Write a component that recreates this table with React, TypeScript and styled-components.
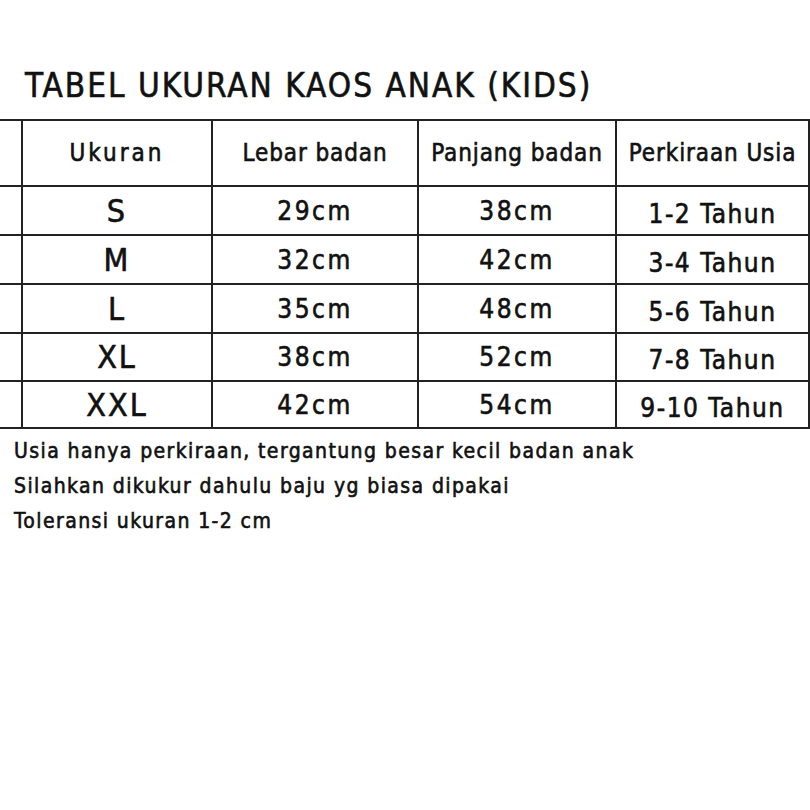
import React from "react";
import styled, { createGlobalStyle } from "styled-components";

const GlobalStyle = createGlobalStyle`
  html, body {
    margin: 0;
    padding: 0;
    background: #ffffff;
  }
  body {
    font-family: "DejaVu Sans Condensed", "Liberation Sans", sans-serif;
    color: #111;
    -webkit-text-stroke: 0.6px #111;
  }
`;

const rows = [
  { size: "S", lebar: "29cm", panjang: "38cm", usia: "1-2 Tahun" },
  { size: "M", lebar: "32cm", panjang: "42cm", usia: "3-4 Tahun" },
  { size: "L", lebar: "35cm", panjang: "48cm", usia: "5-6 Tahun" },
  { size: "XL", lebar: "38cm", panjang: "52cm", usia: "7-8 Tahun" },
  { size: "XXL", lebar: "42cm", panjang: "54cm", usia: "9-10 Tahun" },
];

const notes = [
  "Usia hanya perkiraan, tergantung besar kecil badan anak",
  "Silahkan dikukur dahulu baju yg biasa dipakai",
  "Toleransi ukuran 1-2 cm",
];

function App() {
  return (
    <>
      <GlobalStyle />
      <Page>
        <Title>TABEL UKURAN KAOS ANAK (KIDS)</Title>
        <SizeTable>
          <colgroup>
            <col style={{ width: 22 }} />
            <col style={{ width: 190 }} />
            <col style={{ width: 206 }} />
            <col style={{ width: 198 }} />
            <col style={{ width: 193 }} />
          </colgroup>
          <thead>
            <tr>
              <Spacer />
              <HeadCell $wide>Ukuran</HeadCell>
              <HeadCell>Lebar badan</HeadCell>
              <HeadCell>Panjang badan</HeadCell>
              <HeadCell>Perkiraan Usia</HeadCell>
            </tr>
          </thead>
          <tbody>
            {rows.map((r, i) => (
              <Row key={r.size} $h={i === 3 ? 48 : i === 4 ? 47 : 49}>
                <Spacer />
                <SizeCell>{r.size}</SizeCell>
                <ValueCell>{r.lebar}</ValueCell>
                <ValueCell>{r.panjang}</ValueCell>
                <AgeCell>{r.usia}</AgeCell>
              </Row>
            ))}
          </tbody>
        </SizeTable>
        <Notes>
          {notes.map((n) => (
            <Note key={n}>{n}</Note>
          ))}
        </Notes>
      </Page>
    </>
  );
}
export default App;

const Page = styled.div`
  width: 810px;
  height: 810px;
  padding-top: 68px;
  box-sizing: border-box;
  overflow: hidden;
`;

const Title = styled.h1`
  margin: 0 0 15px 25px;
  font-size: 33px;
  line-height: 36px;
  font-weight: 400;
  letter-spacing: 2px;
  color: #111;
`;

const SizeTable = styled.table`
  border-collapse: collapse;
  table-layout: fixed;
  width: 809px;
  border-top: 2px solid #222;
  border-bottom: 2px solid #222;
`;

const Cell = styled.td`
  border: 2px solid #222;
  text-align: center;
  vertical-align: middle;
  padding: 0;
  color: #111;
  font-weight: 400;
`;

const Spacer = styled(Cell)`
  border-left: none;
`;

const HeadCell = styled(Cell).attrs({ as: "th" })<{ $wide?: boolean }>`
  height: 64px;
  font-size: 24px;
  font-weight: 400;
  letter-spacing: ${(p) => (p.$wide ? "3px" : "0.9px")};
`;

const Row = styled.tr<{ $h: number }>`
  height: ${(p) => p.$h}px;
`;

const SizeCell = styled(Cell)`
  font-size: 32px;
  letter-spacing: 2px;
`;

const ValueCell = styled(Cell)`
  font-size: 26px;
  letter-spacing: 2.5px;
`;

const AgeCell = styled(Cell)`
  font-size: 26px;
  letter-spacing: 1.5px;
  padding-top: 6px;
`;

const Notes = styled.div`
  display: flex;
  flex-direction: column;
  gap: 11px;
  padding: 10px 0 0 14px;
`;

const Note = styled.div`
  font-size: 21px;
  line-height: 24px;
  letter-spacing: 1.4px;
  color: #111;
`;
